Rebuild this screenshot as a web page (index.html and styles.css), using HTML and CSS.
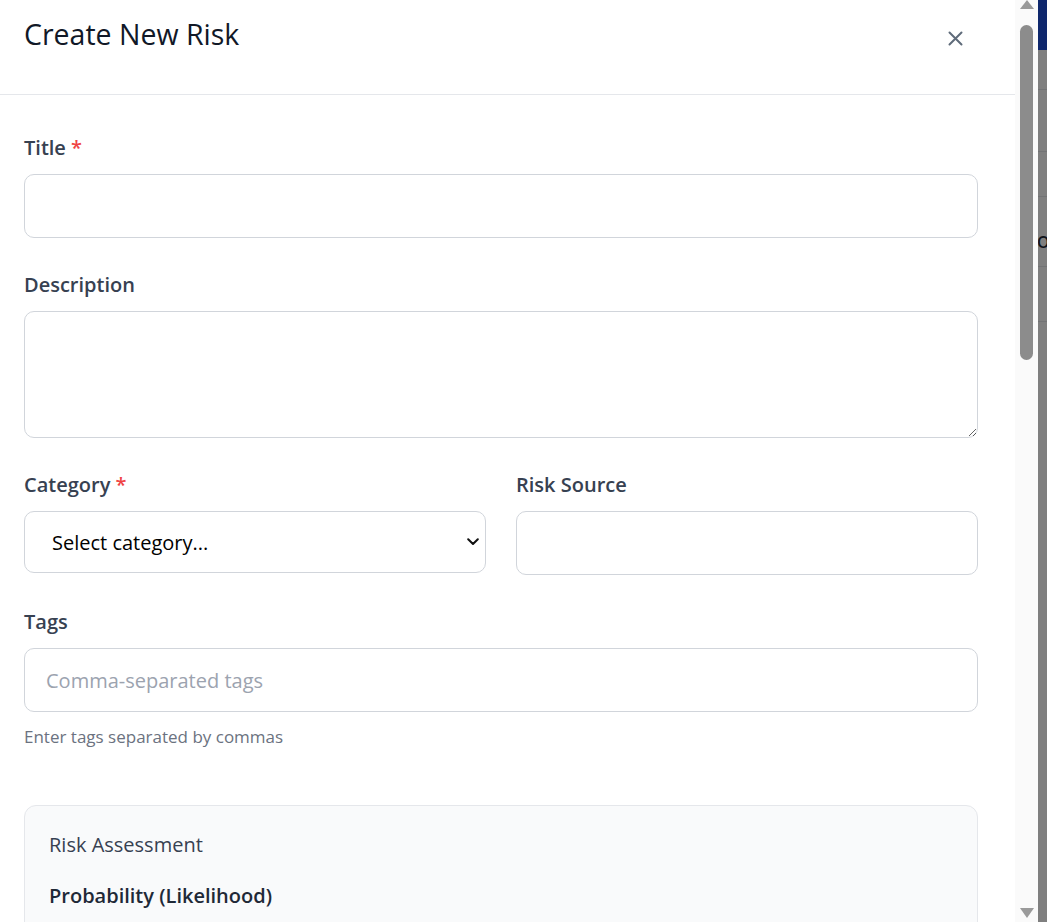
FILE: index.html
```html
<!DOCTYPE html>
<html lang="en">
<head>
<meta charset="utf-8">
<title>Create New Risk</title>
<link rel="stylesheet" href="styles.css">
</head>
<body>
  <div class="page">
    <header class="page-top"></header>
    <div class="page-row page-row-nav"></div>
    <div class="page-row page-row-a"></div>
    <div class="page-row page-row-b"></div>
    <div class="page-row page-row-c"><span class="page-text">Owner</span></div>
    <div class="page-row page-row-d"></div>
  </div>

  <div class="overlay">
    <div class="dialog">
      <div class="modal-viewport">
        <div class="modal">
          <div class="modal-header">
            <h2 class="modal-title">Create New Risk</h2>
            <button class="close-btn" type="button" aria-label="Close">
              <svg width="15" height="15" viewBox="0 0 15 15" fill="none" stroke="currentColor" stroke-width="2" stroke-linecap="round">
                <path d="M1.5 1.5 L13.5 13.5 M13.5 1.5 L1.5 13.5"/>
              </svg>
            </button>
          </div>

          <form class="modal-body">
            <div class="field">
              <label class="label">Title <span class="req">*</span></label>
              <input class="control" type="text">
            </div>

            <div class="field">
              <label class="label">Description</label>
              <textarea class="control textarea"></textarea>
            </div>

            <div class="field row-2">
              <div class="col">
                <label class="label">Category <span class="req">*</span></label>
                <div class="select-wrap">
                  <select class="control select">
                    <option>Select category...</option>
                  </select>
                  <svg class="chevron" width="12" height="8" viewBox="0 0 12 8" fill="none" stroke="#111" stroke-width="2" stroke-linecap="round" stroke-linejoin="round">
                    <path d="M1.2 1.2 L6 6 L10.8 1.2"/>
                  </svg>
                </div>
              </div>
              <div class="col">
                <label class="label">Risk Source</label>
                <input class="control" type="text">
              </div>
            </div>

            <div class="field">
              <label class="label">Tags</label>
              <input class="control" type="text" placeholder="Comma-separated tags">
              <p class="help">Enter tags separated by commas</p>
            </div>

            <section class="assess">
              <h3 class="assess-title">Risk Assessment</h3>
              <label class="label label-strong">Probability (Likelihood)</label>
              <div class="select-wrap">
                <select class="control select">
                  <option>Select probability...</option>
                </select>
                <svg class="chevron" width="12" height="8" viewBox="0 0 12 8" fill="none" stroke="#111" stroke-width="2" stroke-linecap="round" stroke-linejoin="round">
                  <path d="M1.2 1.2 L6 6 L10.8 1.2"/>
                </svg>
              </div>
              <label class="label label-strong label-gap">Impact (Severity)</label>
              <div class="select-wrap">
                <select class="control select">
                  <option>Select impact...</option>
                </select>
                <svg class="chevron" width="12" height="8" viewBox="0 0 12 8" fill="none" stroke="#111" stroke-width="2" stroke-linecap="round" stroke-linejoin="round">
                  <path d="M1.2 1.2 L6 6 L10.8 1.2"/>
                </svg>
              </div>
            </section>

            <div class="field field-after">
              <label class="label">Mitigation Plan</label>
              <textarea class="control textarea"></textarea>
            </div>

            <div class="field">
              <label class="label">Owner</label>
              <input class="control" type="text">
            </div>

            <div class="actions">
              <button class="btn btn-secondary" type="button">Cancel</button>
              <button class="btn btn-primary" type="button">Create Risk</button>
            </div>
          </form>
        </div>
      </div>

      <div class="scrollbar" aria-hidden="true">
        <span class="sb-arrow sb-up"></span>
        <span class="sb-thumb"></span>
        <span class="sb-spacer"></span>
        <span class="sb-arrow sb-down"></span>
      </div>
    </div>
  </div>
</body>
</html>
```

FILE: styles.css
```css
* {
  box-sizing: border-box;
}

html,
body {
  margin: 0;
  height: 100%;
}

body {
  font-family: "Open Sans", "Noto Sans", sans-serif;
  overflow: hidden;
  position: relative;
  background: #ffffff;
}

/* page behind the modal */
.page {
  height: 922px;
  background: #ffffff;
}

.page-top {
  height: 50px;
  background: #1d4ed8;
}

.page-row {
  border-bottom: 1px solid #e5e7eb;
}

.page-row-nav {
  height: 40px;
}

.page-row-a {
  height: 62px;
}

.page-row-b {
  height: 45px;
}

.page-row-c {
  height: 70px;
  padding-left: 1037px;
  padding-top: 34px;
}

.page-text {
  font-size: 16px;
  font-weight: 600;
  color: #1f2937;
  white-space: nowrap;
}

.page-row-d {
  height: 55px;
}

/* overlay + dialog */
.overlay {
  position: fixed;
  inset: 0;
  background: rgba(0, 0, 0, 0.5);
}

.dialog {
  width: 1038px;
  height: 100%;
  display: flex;
}

.modal-viewport {
  width: 1015px;
  height: 100%;
  overflow: hidden;
  background: #ffffff;
}

.scrollbar {
  width: 23px;
  height: 100%;
  background: #fafafa;
  display: flex;
  flex-direction: column;
  align-items: center;
}

.sb-arrow {
  width: 0;
  height: 0;
  border-left: 7.5px solid transparent;
  border-right: 7.5px solid transparent;
}

.sb-up {
  border-bottom: 9px solid #9a9a9a;
}

.sb-down {
  border-top: 10px solid #9a9a9a;
  margin-bottom: 4px;
}

.sb-thumb {
  width: 13px;
  height: 335px;
  margin-top: 16px;
  border-radius: 7px;
  background: #8c8c8c;
}

.sb-spacer {
  flex: 1;
}

/* modal */
.modal {
  background: #ffffff;
}

.modal-header {
  height: 95px;
  border-bottom: 1px solid #e5e7eb;
  padding: 16px 40px 0 24px;
  display: flex;
  justify-content: space-between;
  align-items: flex-start;
}

.modal-title {
  margin: 0;
  font-size: 28.5px;
  line-height: 36px;
  font-weight: 400;
  color: #111827;
}

.close-btn {
  width: 40px;
  height: 40px;
  margin-top: 2px;
  border: 0;
  padding: 0;
  background: transparent;
  color: #5f6b7a;
  display: flex;
  align-items: center;
  justify-content: center;
}

.modal-body {
  padding: 38px 37px 60px 24px;
  display: flex;
  flex-direction: column;
}

.field {
  display: flex;
  flex-direction: column;
  margin-bottom: 32px;
}

.label {
  display: block;
  font-size: 20px;
  line-height: 30px;
  font-weight: 600;
  color: #374151;
  margin-bottom: 11px;
}

.req {
  color: #ef4444;
}

.control {
  width: 100%;
  height: 64px;
  border: 1px solid #d1d5db;
  border-radius: 10px;
  background: #ffffff;
  font-family: inherit;
  font-size: 20px;
  color: #111827;
  padding: 0 21px;
  outline: none;
}

.control::placeholder {
  color: #9ca3af;
}

.textarea {
  height: 127px;
  padding-top: 14px;
  resize: vertical;
}

.row-2 {
  flex-direction: row;
  gap: 30px;
}

.col {
  flex: 1;
  display: flex;
  flex-direction: column;
}

.select-wrap {
  position: relative;
}

.select {
  appearance: none;
  -webkit-appearance: none;
  height: 62px;
  padding-left: 27px;
  color: #000000;
}

.chevron {
  position: absolute;
  right: 7px;
  top: 27px;
  pointer-events: none;
}

.assess .chevron {
  right: 18px;
}

.help {
  margin: 13px 0 0;
  font-size: 17px;
  line-height: 24px;
  color: #6b7280;
}

.assess {
  margin-top: 24px;
  border: 1px solid #e5e7eb;
  border-radius: 12px;
  background: #f9fafb;
  padding: 24px 24px 28px;
}

.assess-title {
  margin: 0 0 21px;
  font-size: 20px;
  line-height: 30px;
  font-weight: 400;
  color: #374151;
}

.label-strong {
  color: #1f2937;
  margin-bottom: 14px;
}

.label-gap {
  margin-top: 24px;
}

.field-after {
  margin-top: 32px;
}

.actions {
  display: flex;
  justify-content: flex-end;
  gap: 12px;
  margin-top: 8px;
}

.btn {
  font-family: inherit;
  font-size: 18px;
  height: 50px;
  padding: 0 24px;
  border-radius: 10px;
  border: 1px solid #d1d5db;
}

.btn-secondary {
  background: #ffffff;
  color: #374151;
}

.btn-primary {
  background: #1d4ed8;
  border-color: #1d4ed8;
  color: #ffffff;
}
```
